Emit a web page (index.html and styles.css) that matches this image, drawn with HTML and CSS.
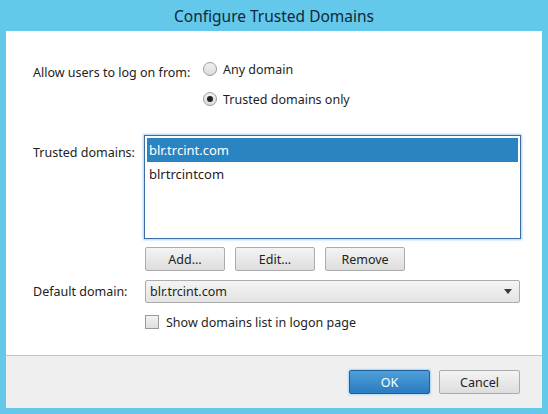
FILE: index.html
```html
<!DOCTYPE html>
<html>
<head>
<meta charset="utf-8">
<link rel="stylesheet" href="styles.css">
</head>
<body>
<div class="frame">
  <div class="titlebar">Configure Trusted Domains</div>
  <div class="dialog">
    <div class="content">
      <div class="row row-allow">
        <div class="label label-allow">Allow users to log on from:</div>
        <div class="radios">
          <label class="radio-item"><span class="radio"></span>Any domain</label>
          <label class="radio-item"><span class="radio checked"><span class="dot"></span></span>Trusted domains only</label>
        </div>
      </div>
      <div class="row row-trusted">
        <div class="label label-trusted">Trusted domains:</div>
        <div class="field">
          <div class="listbox">
            <div class="list-item selected">blr.trcint.com</div>
            <div class="list-item">blrtrcintcom</div>
          </div>
          <div class="buttons">
            <button class="btn">Add...</button>
            <button class="btn">Edit...</button>
            <button class="btn">Remove</button>
          </div>
        </div>
      </div>
      <div class="row row-default">
        <div class="label label-default">Default domain:</div>
        <div class="field">
          <div class="dropdown">
            <span>blr.trcint.com</span>
            <svg class="caret" width="8" height="5" viewBox="0 0 8 5"><path d="M0 0H8L4 5Z" fill="#3a3a3a"/></svg>
          </div>
          <label class="check-item"><span class="checkbox"></span>Show domains list in logon page</label>
        </div>
      </div>
    </div>
    <div class="footer">
      <button class="btn btn-primary">OK</button>
      <button class="btn">Cancel</button>
    </div>
  </div>
</div>
</body>
</html>
```

FILE: styles.css
```css
* { box-sizing: border-box; }
html, body {
  margin: 0;
  padding: 0;
  background: #63c8e9;
  font-family: "Noto Sans", "Open Sans", sans-serif;
  font-size: 12.5px;
  color: #1e1e1e;
}
.frame {
  width: 548px;
  height: 414px;
  display: flex;
  flex-direction: column;
  background: #63c8e9;
}
.titlebar {
  height: 31px;
  display: flex;
  align-items: center;
  justify-content: center;
  font-size: 15.5px;
  color: #10293a;
  padding-top: 1px;
}
.dialog {
  margin: 0 6px;
  background: #ffffff;
  display: flex;
  flex-direction: column;
  height: 377px;
}
.content {
  height: 324px;
  padding: 29px 0 0 27px;
  display: flex;
  flex-direction: column;
}
.row {
  display: flex;
}
.label {
  width: 111px;
  flex: none;
  white-space: nowrap;
  color: #222;
}
.label-allow { width: 170px; padding-top: 4px; }
.radios {
  display: flex;
  flex-direction: column;
  gap: 12px;
}
.radio-item {
  display: flex;
  align-items: center;
  height: 18px;
  gap: 6px;
}
.radio {
  width: 14px;
  height: 14px;
  border-radius: 50%;
  border: 1px solid #9a9a9a;
  background: linear-gradient(#f0f0f0, #dcdcdc);
  display: flex;
  align-items: center;
  justify-content: center;
}
.radio .dot {
  width: 6px;
  height: 6px;
  border-radius: 50%;
  background: #222;
}
.row-trusted { margin-top: 27px; }
.label-trusted { padding-top: 9px; }
.field {
  display: flex;
  flex-direction: column;
}
.listbox {
  width: 377px;
  height: 104px;
  border: 1px solid #3d6da5;
  box-shadow: 0 0 2px 1px rgba(120, 180, 230, 0.6);
  padding: 2px;
}
.list-item {
  height: 24px;
  line-height: 24px;
  padding-left: 2px;
  font-size: 13px;
  color: #2a1a1a;
}
.list-item.selected {
  background: #2a84c2;
  color: #ffffff;
}
.buttons {
  display: flex;
  gap: 10px;
  margin-top: 8px;
  padding-left: 1px;
}
.btn {
  font-family: inherit;
  font-size: 12.5px;
  width: 80px;
  height: 24px;
  border: 1px solid #acacac;
  border-radius: 2px;
  background: linear-gradient(#f4f4f4, #dddddd);
  color: #222;
  padding: 0;
}
.row-default { margin-top: 9px; }
.label-default { padding-top: 3px; }
.dropdown {
  width: 375px;
  height: 23px;
  margin-left: 1px;
  border: 1px solid #acacac;
  border-radius: 2px;
  background: linear-gradient(#f5f5f5, #e3e3e3);
  display: flex;
  align-items: center;
  justify-content: space-between;
  padding: 0 7px 0 4px;
}
.check-item {
  display: flex;
  align-items: center;
  gap: 7px;
  margin-top: 11px;
  margin-left: 1px;
  height: 16px;
}
.checkbox {
  width: 14px;
  height: 14px;
  border: 1px solid #9a9a9a;
  background: linear-gradient(#f2f2f2, #dedede);
}
.footer {
  flex: 1;
  background: #efefef;
  border-top: 1px solid #c4c4c4;
  display: flex;
  justify-content: flex-end;
  align-items: center;
  gap: 9px;
  padding: 0 22px 0 0;
}
.footer .btn { width: 81px; }
.btn-primary {
  background: linear-gradient(#4ea0da, #2a7bc0);
  border: 1px solid #1d5f9a;
  color: #ffffff;
  box-shadow: 0 0 2px 1px rgba(120, 190, 240, 0.5);
}
```
